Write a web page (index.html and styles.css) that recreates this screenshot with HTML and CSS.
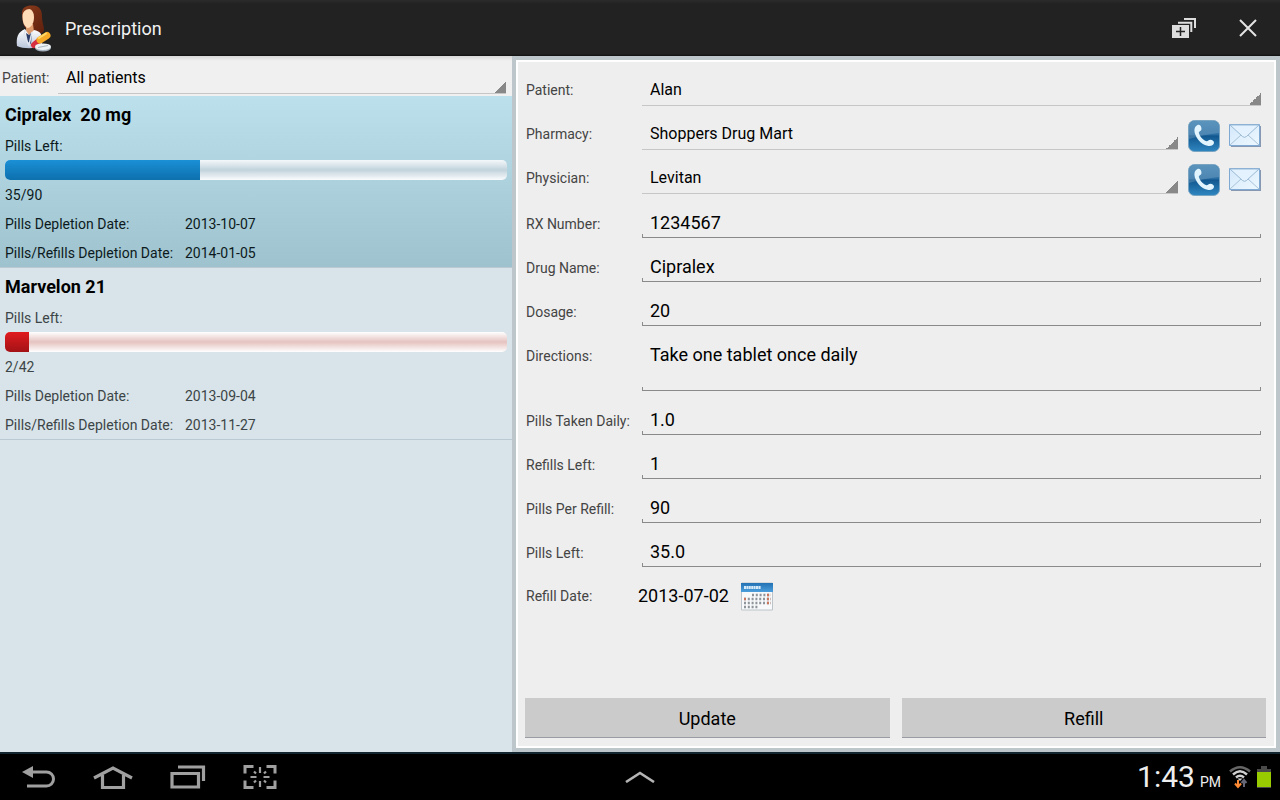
FILE: index.html
```
<!DOCTYPE html>
<html lang="en">
<head>
<meta charset="utf-8">
<title>Prescription</title>
<link rel="stylesheet" href="styles.css">
</head>
<body>
<svg class="defs" width="0" height="0" aria-hidden="true">
  <defs>
    <linearGradient id="phoneFill" x1="0" y1="0" x2="0" y2="1">
      <stop offset="0" stop-color="#3a7fb0"/><stop offset=".45" stop-color="#2a6ea3"/><stop offset=".5" stop-color="#12578f"/><stop offset="1" stop-color="#2f86c0"/>
    </linearGradient>
    <linearGradient id="mailFill" x1="0" y1="0" x2="1" y2="1">
      <stop offset="0" stop-color="#d3e8fb"/><stop offset="1" stop-color="#eef8ff"/>
    </linearGradient>
    <linearGradient id="hairFill" x1="0" y1="0" x2="1" y2="1">
      <stop offset="0" stop-color="#8a3c1c"/><stop offset="1" stop-color="#5e200d"/>
    </linearGradient>
    <linearGradient id="coatFill" x1="0" y1="0" x2="0" y2="1">
      <stop offset="0" stop-color="#ffffff"/><stop offset="1" stop-color="#b9c6dc"/>
    </linearGradient>
    <linearGradient id="calFill" x1="0" y1="0" x2="0" y2="1">
      <stop offset="0" stop-color="#2372b4"/><stop offset="1" stop-color="#4c9edb"/>
    </linearGradient>
    <symbol id="phone" viewBox="0 0 32 32">
      <rect x=".5" y=".5" width="31" height="31" rx="6" fill="url(#phoneFill)" stroke="#7aa5c2"/>
      <path d="M1 7a6 6 0 0 1 6-6h18a6 6 0 0 1 6 6v6C21 14 11 16 1 19z" fill="#fff" opacity=".17"/>
      <path d="M9.500 5C6.500 6.500 5.500 10 7.500 15c2.500 6 7 9.700 12 10.700 3.500.7 6.500-.7 6.500-3 0-1.700-1.500-2.700-3.700-2.900-1.700-.1-2.300 1.500-3.800 1.400-3.300-.8-7-5.200-7.700-8.500.1-1.400 2.700-1.600 2.700-4C13.300 6.200 11.800 4.300 9.500 5z" fill="#e2f5fe"/>
    </symbol>
    <symbol id="mail" viewBox="0 0 32 24">
      <path d="M2 2h30v21H2z" fill="#8798b2"/>
      <path d="M.5.5h30v21H.5z" fill="url(#mailFill)" stroke="#7fa9d3"/>
      <path d="M1 21l11-10M30 21L19 11" fill="none" stroke="#a9c3da"/>
      <path d="M1 1l12.500 11.500q2 1.700 4 0L30 1z" fill="#e3f2fe" stroke="#9ab9d4"/>
    </symbol>
  </defs>
</svg>

<header class="topbar">
  <svg class="logo" viewBox="0 0 38 48" aria-hidden="true">
    <path d="M8 9C8 3 13 1 19 1.500c7 .5 9 5 9 11 0 6 2 9 2 13 0 3-3 5-7 4l-9-3C9 23 8 15 8 9z" fill="url(#hairFill)"/>
    <path d="M12 20h7l1 8-5 4-3-5z" fill="#dc9a6c"/>
    <path d="M8.500 12c0-4 3-7 7-7 3 1 4.500 4 4.500 8 0 5-2 10-6 11-4-1-5.500-6-5.500-12z" fill="#ffdcb8"/>
    <path d="M3 42C2 33 4 28 11 25l4 6 5-5c6 1 8 4 8 9v7c-7 3-19 3-25 0z" fill="url(#coatFill)"/>
    <path d="M12 29l3 2 3-3-1 12-3-2z" fill="#2b3c67"/>
    <path d="M11 26l-1 6 5 9 3-13" fill="none" stroke="#dde4ee" stroke-width="1.500"/>
    <path d="M20 41l6-5" stroke="#d62f3f" stroke-width="6" stroke-linecap="round"/>
    <path d="M26 36l7-4.500" stroke="#f7a928" stroke-width="7" stroke-linecap="round"/>
    <path d="M25 34l7-4.500" stroke="#ffd968" stroke-width="2" stroke-linecap="round"/>
    <ellipse cx="29" cy="44" rx="8" ry="3.500" fill="#a4b1bd"/>
    <ellipse cx="29" cy="42.700" rx="8" ry="3.300" fill="#edf2f5"/>
    <path d="M24 43.500l10-2" stroke="#a9b5bf"/>
  </svg>
  <h1 class="title">Prescription</h1>
  <button class="bar-button" type="button" aria-label="Add prescription">
    <svg width="24" height="20" viewBox="0 0 24 20" aria-hidden="true">
      <path d="M0 7h17v13H0z" fill="#ddd"/>
      <path d="M4 13.500h9M8.500 9v9" stroke="#222" stroke-width="1.500"/>
      <path d="M6 4.700h13.300V14M12 1h11v9" fill="none" stroke="#ddd" stroke-width="2"/>
    </svg>
  </button>
  <button class="bar-button" type="button" aria-label="Close">
    <svg width="20" height="20" viewBox="0 0 20 20" aria-hidden="true"><path d="M2 2l16 16M18 2L2 18" stroke="#e4e4e4" stroke-width="2"/></svg>
  </button>
</header>

<main class="content">
  <section class="list-pane">
    <div class="filter">
      <label class="filter-label" for="filter">Patient:</label>
      <select class="spinner filter-spinner" id="filter"><option>All patients</option></select>
    </div>
    <ul class="items">
      <li class="item selected">
        <h2 class="drug">Cipralex&nbsp; 20 mg</h2>
        <label class="caption" for="left1">Pills Left:</label>
        <progress class="meter" id="left1" value="35" max="90"></progress>
        <p class="count">35/90</p>
        <dl class="dates">
          <dt>Pills Depletion Date:</dt><dd>2013-10-07</dd>
          <dt>Pills/Refills Depletion Date:</dt><dd>2014-01-05</dd>
        </dl>
      </li>
      <li class="item">
        <h2 class="drug">Marvelon 21</h2>
        <label class="caption" for="left2">Pills Left:</label>
        <progress class="meter low" id="left2" value="2" max="42"></progress>
        <p class="count">2/42</p>
        <dl class="dates">
          <dt>Pills Depletion Date:</dt><dd>2013-09-04</dd>
          <dt>Pills/Refills Depletion Date:</dt><dd>2013-11-27</dd>
        </dl>
      </li>
    </ul>
  </section>

  <section class="detail-pane">
    <form class="form">
      <div class="row">
        <label class="label" for="patient">Patient:</label>
        <select class="spinner" id="patient"><option>Alan</option></select>
      </div>
      <div class="row">
        <label class="label" for="pharmacy">Pharmacy:</label>
        <select class="spinner" id="pharmacy"><option>Shoppers Drug Mart</option></select>
        <div class="contacts">
          <button class="icon-button" type="button" aria-label="Call pharmacy"><svg width="32" height="32" aria-hidden="true"><use href="#phone"/></svg></button>
          <button class="icon-button" type="button" aria-label="Email pharmacy"><svg width="32" height="24" aria-hidden="true"><use href="#mail"/></svg></button>
        </div>
      </div>
      <div class="row">
        <label class="label" for="physician">Physician:</label>
        <select class="spinner" id="physician"><option>Levitan</option></select>
        <div class="contacts">
          <button class="icon-button" type="button" aria-label="Call physician"><svg width="32" height="32" aria-hidden="true"><use href="#phone"/></svg></button>
          <button class="icon-button" type="button" aria-label="Email physician"><svg width="32" height="24" aria-hidden="true"><use href="#mail"/></svg></button>
        </div>
      </div>
      <div class="row edit"><label class="label" for="rx">RX Number:</label><input class="field" id="rx" value="1234567"></div>
      <div class="row edit"><label class="label" for="drug">Drug Name:</label><input class="field" id="drug" value="Cipralex"></div>
      <div class="row edit"><label class="label" for="dosage">Dosage:</label><input class="field" id="dosage" value="20"></div>
      <div class="row edit tall"><label class="label" for="directions">Directions:</label><textarea class="field area" id="directions" rows="2">Take one tablet once daily</textarea></div>
      <div class="row edit"><label class="label" for="daily">Pills Taken Daily:</label><input class="field" id="daily" value="1.0"></div>
      <div class="row edit"><label class="label" for="refills">Refills Left:</label><input class="field" id="refills" value="1"></div>
      <div class="row edit"><label class="label" for="per">Pills Per Refill:</label><input class="field" id="per" value="90"></div>
      <div class="row edit"><label class="label" for="left">Pills Left:</label><input class="field" id="left" value="35.0"></div>
      <div class="date-row">
        <span class="date-label">Refill Date:</span>
        <span class="date">2013-07-02</span>
        <button class="icon-button" type="button" aria-label="Choose refill date">
          <svg width="32" height="30" viewBox="0 0 32 30" aria-hidden="true">
            <path d="M.5 2h31v27H.5z" fill="#f8f9fa" stroke="#bcc4ca"/>
            <path d="M0 2h32v9H0z" fill="url(#calFill)"/>
            <path d="M3 6.500h17" stroke="#d5eaf8" stroke-width="3" stroke-dasharray="2 .4"/>
            <path d="M11 14h19M3 18h27M3 22h27M3 26h15" stroke="#8d959b" stroke-width="2.500" stroke-dasharray="2 1.800"/>
            <path d="M26 14h4M3 18h2M26 18h4M26 22h4" stroke="#c9765d" stroke-width="2.500" stroke-dasharray="2 1.800"/>
          </svg>
        </button>
      </div>
      <div class="actions">
        <button class="action" type="button">Update</button>
        <button class="action" type="button">Refill</button>
      </div>
    </form>
  </section>
</main>

<footer class="navbar">
  <div class="nav-keys">
    <button class="nav-button" type="button" aria-label="Back">
      <svg width="34" height="24" viewBox="0 0 34 24" aria-hidden="true"><path d="M9 7h15.500a7 7 0 0 1 0 14H5" fill="none" stroke="#a0a0a0" stroke-width="3"/><path d="M0 7l11-6v12z" fill="#a0a0a0"/></svg>
    </button>
    <button class="nav-button" type="button" aria-label="Home">
      <svg width="40" height="24" viewBox="0 0 40 24" aria-hidden="true"><path d="M1 13L20 3l19 10M9.500 10v12.500h21V10" fill="none" stroke="#a0a0a0" stroke-width="3.200"/></svg>
    </button>
    <button class="nav-button" type="button" aria-label="Recent apps">
      <svg width="36" height="24" viewBox="0 0 36 24" aria-hidden="true"><path d="M2 8.500h26.500v13.500H2zM8 2h25.500v14" fill="none" stroke="#a0a0a0" stroke-width="3.200"/></svg>
    </button>
    <button class="nav-button" type="button" aria-label="Screen capture">
      <svg width="34" height="26" viewBox="0 0 34 26" aria-hidden="true"><path d="M2 9.500V2.500h8.500M23.500 2.500H32v7M32 16.500v7h-8.500M10.500 23.500H2v-7" fill="none" stroke="#a0a0a0" stroke-width="3"/><path d="M17 3v6M17 17v6M7.500 13h6M20.500 13h6M11 7.500l2 2M23 7.500l-2 2M11 18.500l2-2M23 18.500l-2-2" stroke="#a0a0a0" stroke-width="2.200"/></svg>
    </button>
  </div>
  <button class="nav-button" type="button" aria-label="Show tray">
    <svg width="30" height="12" viewBox="0 0 30 12" aria-hidden="true"><path d="M1 11L15 2l14 9" fill="none" stroke="#b4b4b4" stroke-width="2.600"/></svg>
  </button>
  <div class="status">
    <time class="clock">1:43</time>
    <span class="meridiem">PM</span>
    <svg class="wifi" width="22" height="24" viewBox="0 0 22 24" aria-hidden="true">
      <path d="M1 6.500Q11-2 21 6.500" fill="none" stroke="#666" stroke-width="2.600"/>
      <path d="M4 9.500Q11 3 18 9.500M7 12.500q4-3.500 8 0" fill="none" stroke="#d0d0d0" stroke-width="2.400"/>
      <path d="M8.500 13.500h5L11 16z" fill="#d0d0d0"/>
      <path d="M9 15v7M6 18.500l3 3.500 3-3.500" fill="none" stroke="#ff8a33" stroke-width="2"/>
      <path d="M15 22v-7M12.500 18l2.500-3 2.500 3" fill="none" stroke="#667" stroke-width="2"/>
    </svg>
    <svg width="14" height="22" viewBox="0 0 14 22" aria-hidden="true"><path d="M4 0h6v3h4v19H0V3h4z" fill="#4a4a4a"/><path d="M0 6h14v15H0z" fill="#99cc00"/></svg>
  </div>
</footer>
</body>
</html>
```

FILE: styles.css
```
* { box-sizing: border-box; }

body {
  margin: 0;
  min-height: 100vh;
  display: flex;
  flex-direction: column;
  font-family: Roboto, "Liberation Sans", sans-serif;
  font-size: 14px;
  line-height: 20px;
  color: #000;
  background: #000;
}

h1, h2, p, ul, dl, dd { margin: 0; padding: 0; }
button { border: 0; padding: 0; background: none; font: inherit; color: inherit; }
svg { display: block; }
.defs { position: absolute; }

.topbar {
  display: flex;
  align-items: center;
  height: 56px;
  padding-left: 14px;
  background: linear-gradient(#2b2b2b, #222 4px, #222 54px, #111);
}
.logo { width: 38px; height: 48px; }
.title {
  flex: 1;
  padding: 2px 0 0 13px;
  font-size: 18px;
  font-weight: 400;
  line-height: 24px;
  color: #f2f2f2;
}
.bar-button {
  width: 64px;
  height: 56px;
  display: grid;
  place-items: center;
}

.content {
  flex: 1;
  display: grid;
  grid-template-columns: 2fr 3fr;
}

.list-pane { background: #d8e4e9; }
.filter {
  display: flex;
  height: 40px;
  padding: 0 6px 2px 2px;
  background: linear-gradient(#d8d8d8, #f0f0f0 5px);
}
.filter-label { width: 56px; padding-top: 12px; color: #444; }

.spinner {
  flex: 1;
  min-width: 0;
  appearance: none;
  border: 0;
  border-bottom: 1px solid #c6c6c6;
  border-radius: 0;
  padding: 13px 20px 0 8px;
  font: inherit;
  font-size: 16px;
  color: #000;
  background: linear-gradient(135deg, transparent 50%, #888 50%) right bottom / 12px 12px no-repeat;
}
.filter-spinner { padding-top: 6px; }

.items { list-style: none; }
.item {
  padding: 7px 5px 4px;
  border-bottom: 1px solid #b9cad2;
  color: #3c4447;
}
.item.selected {
  color: #0c1a20;
  background: linear-gradient(#bce1ed, #9ec2ce);
}
.drug { font-size: 18px; font-weight: 700; line-height: 24px; color: #000; }
.caption { display: block; padding: 9px 0 4px; }
.meter {
  appearance: none;
  display: block;
  width: 100%;
  height: 20px;
  border: 0;
  border-radius: 5px;
  overflow: hidden;
}
.meter::-webkit-progress-bar { background: linear-gradient(#f4f8fa, #c2d3dc 50%, #fafcfd); }
.meter::-webkit-progress-value { background: linear-gradient(#1b90d6, #0d70ad); }
.meter.low::-webkit-progress-bar { background: linear-gradient(#fff, #e5c3c0 50%, #fff); }
.meter.low::-webkit-progress-value { background: linear-gradient(#e01b1f, #a31216); }
.count { padding-top: 5px; }
.dates {
  display: grid;
  grid-template-columns: 180px 1fr;
  row-gap: 9px;
  padding-top: 9px;
}

.detail-pane {
  display: flex;
  padding: 4px;
  background: #bdc7cb;
}
.form {
  flex: 1;
  display: flex;
  flex-direction: column;
  padding: 0 8px 8px 7px;
  border: 2px solid #fff;
  background: #eee;
}
.row {
  display: flex;
  height: 44px;
  margin: 0 5px 0 1px;
}
.tall { height: 65px; }
.label { width: 116px; padding-top: 18px; color: #444; }
.edit .label { padding-top: 20px; }
.contacts {
  display: flex;
  align-items: center;
  gap: 9px;
  padding: 14px 0 0 10px;
  height: 46px;
}

.field {
  flex: 1;
  min-width: 0;
  border: 0;
  border-radius: 0;
  padding: 14px 8px 0;
  font: inherit;
  font-size: 18px;
  line-height: 24px;
  color: #000;
  background:
    linear-gradient(#8a8a8a, #8a8a8a) left bottom / 1px 4px no-repeat,
    linear-gradient(#8a8a8a, #8a8a8a) right bottom / 1px 4px no-repeat,
    linear-gradient(#8a8a8a, #8a8a8a) left bottom / 100% 1px no-repeat;
}
.area { padding-top: 17px; resize: none; overflow: hidden; }

.date-row {
  display: flex;
  align-items: center;
  padding: 14px 0 0 1px;
}
.date-label { width: 112px; color: #444; }
.date { padding-right: 12px; font-size: 18px; line-height: 24px; }

.actions {
  display: grid;
  grid-template-columns: 1fr 1fr;
  gap: 12px;
  margin-top: auto;
}
.action {
  height: 40px;
  padding-top: 2px;
  border-bottom: 1px solid #9a9ca4;
  font-size: 18px;
  background: #cbcbcb;
}

.navbar {
  display: grid;
  grid-template-columns: 1fr auto 1fr;
  align-items: center;
  height: 48px;
  border-top: 2px solid #12262f;
  padding: 0 9px;
  background: #000;
}
.nav-keys { display: flex; align-items: center; gap: 37px; padding-left: 13px; }
.status {
  display: flex;
  align-items: center;
  justify-content: flex-end;
  color: #eee;
}
.clock { font-size: 30px; line-height: 36px; }
.meridiem { padding: 10px 8px 0 5px; font-size: 14px; }
.wifi { margin-right: 6px; }
```
